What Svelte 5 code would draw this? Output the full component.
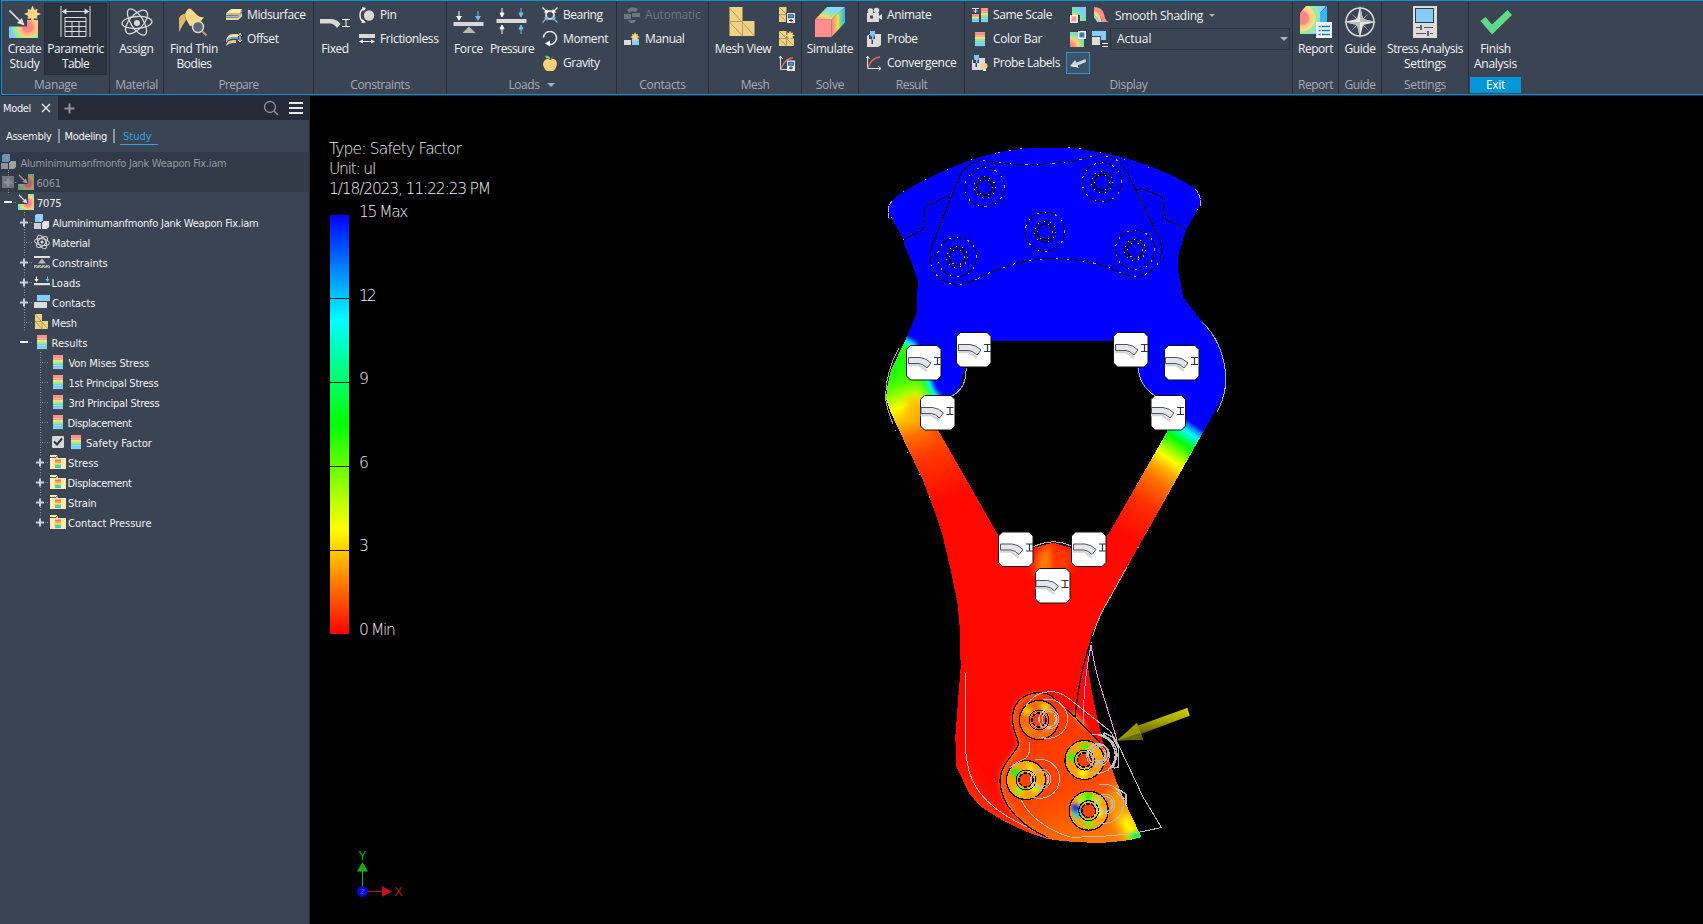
<script>
  // Spreads a label over its designed advance width.
  function fit(node, width) {
    const natural = node.getBoundingClientRect().width;
    const count = node.textContent.length;
    if (width && count) node.style.letterSpacing = (width - natural) / count + 'px';
  }

  const star = (x, y, r) => {
    let p = '';
    for (let i = 0; i < 16; i++) {
      const q = i % 2 ? r * 0.55 : i % 4 ? r * 0.82 : r;
      const a = (i * Math.PI) / 8;
      p += `${(x + q * Math.sin(a)).toFixed(2)},${(y - q * Math.cos(a)).toFixed(2)} `;
    }
    return `<polygon points="${p}" fill="#ffd580"/>`;
  };
  const bands = (x, y, w, h) =>
    ['#ff8f8f', '#ffb48a', '#ffd68a', '#90f090', '#8ae6f5', '#86ccff']
      .map((c, i) => `<rect x="${x}" y="${y + (i * h) / 6}" width="${w}" height="${h / 6 + 0.1}" fill="${c}"/>`)
      .join('');
  const triangles = (x, y, s) =>
    `<path d="M${x} ${y}h${s}v${s}h${s}v${s}h${-2 * s}z" fill="#f0d382"/><path d="M${x} ${y}l${2 * s} ${2 * s}M${x} ${y + s}l${s} ${s}M${x} ${y + s}h${s}v${s}" stroke="#b79a5c" fill="none"/>`;
  const calc = (x, y) =>
    `<rect x="${x}" y="${y}" width="8" height="10.5" fill="#e4e6e8"/><rect x="${x + 1.5}" y="${y + 1.7}" width="5" height="3" fill="#3d9be0" stroke="#2b3442" stroke-width=".7"/><path d="M${x + 2} ${y + 7.5}h4M${x + 4} ${y + 6}v3" stroke="#2b3442"/>`;

  const glyphs = {
    create: ['8 6 32 32', `<path d="M26 20h11v18H8V26.500h18z" fill="url(#hot)"/>${star(31.5, 14, 8.6)}<path d="M8.500 10.500L21 23" stroke="#dfe2e5" stroke-width="1.600"/><path d="M23.500 25.500l-7.500-2.500 5-5z" fill="#dfe2e5"/>`],
    param: ['59.500 6 32 32', `<path d="M60.500 6v31M89.500 6v31M62 11.500h26M64.500 17.500h21v19h-21zM64.500 21.500h21M64.500 26.500h21M64.500 31.500h21M71.500 21.500v15M78.500 21.500v15" fill="none" stroke="#dcdcdc"/><path d="M61 11.500l5-3v6zM89 11.500l-5-3v6z" fill="#dcdcdc"/>`],
    assign: ['121 6 32 32', `<g fill="none" stroke="#d8d8d8" stroke-width="1.300"><ellipse cx="137" cy="22.500" rx="15" ry="6" transform="rotate(-4 137 22.500)"/><ellipse cx="137" cy="22" rx="15" ry="6.200" transform="rotate(58 137 22)"/><ellipse cx="136.500" cy="22" rx="14.500" ry="7" transform="rotate(132 136.500 22)"/></g><circle cx="137" cy="23" r="3" fill="#d8d8d8"/>`],
    thin: ['178 6 32 32', `<path d="M179 32V18q2-4 6-4l1 6q-4 6-7 12z" fill="#d9b968"/><path d="M185 14q3-7 6-5l6 6q4 3 7 2l-5 7-9 2-4-7z" fill="#ffd98a"/><circle cx="198" cy="27" r="5.500" fill="#5b6675" stroke="#dcdcdc" stroke-width="1.400"/><path d="M202.500 31.500l4 4" stroke="#c99a6b" stroke-width="2.200"/>`],
    mids: ['226 7 16 16', `<path d="M226 13l5-4h11l-2 4z" fill="#ffe9ae"/><path d="M226 13h14l2-4v2l-2 4h-14z" fill="#dcb866"/><path d="M226 15.500h12l4-3v2l-4 2.500h-12z" fill="#7cc6fa"/><path d="M226 17.500h12l4-3.500v2.500l-4 3.500h-12z" fill="#f2d68c"/>`],
    offset: ['226 31 16 16', `<path d="M226 41q1-7 7-7h5v3h-5q-3 0-7 4z" fill="#f8dc96"/><path d="M226 42q2-4 7-4h5" stroke="#6cb9f2" stroke-width="1.600" fill="none"/><path d="M226 46q1-6 7-6h3v3h-3q-4 0-7 3z" fill="#e8c87c"/><path d="M240 33.500v8M238 36l2-2.500 2 2.500M238 39.500l2 2.500 2-2.500" fill="none" stroke="#dcdcdc"/>`],
    fixed: ['319 6 32 32', `<path d="M320 19h10q7 0 10.500 5l-3.500 4q-3-4.500-7-4.500h-10z" fill="#d8d8d8"/><path d="M342 19.500h8M342 26.500h8M346 19.500v7" stroke="#fff" fill="none"/>`],
    pin: ['359 7 16 16', `<circle cx="369" cy="15.500" r="5.200" fill="#d8d8d8"/><path d="M365 8.500q-5 1-5 6.500t4 7" fill="none" stroke="#fff" stroke-width="1.300"/><path d="M362 7l4 1-2.500 3zM366 22.500l-4.500.500 1-4z" fill="#fff"/>`],
    fric: ['359 31 16 16', `<path d="M359 34h16v4h-16z" fill="#d8d8d8"/><path d="M360 41.500h14" stroke="#fff"/><path d="M359 41.500l4-2v4zM375 41.500l-4-2v4z" fill="#fff"/>`],
    force: ['452.500 6 32 32', `<path d="M453 22h30v4h-30z" fill="#d8d8d8"/><path d="M468.500 26.500l6.500 6.500h-13z" fill="#b9b9b9"/><path d="M458.500 11v7" stroke="#fff"/><path d="M458.500 21l-3-5h6z" fill="#fff"/><path d="M477.500 11v7" stroke="#73bdf5"/><path d="M477.500 21l-3-5h6z" fill="#73bdf5"/>`],
    pressure: ['496.500 6 32 32', `<path d="M497 19h30v4h-30z" fill="#d8d8d8"/><g stroke="#fff" fill="#fff"><path d="M502.500 8v6M502.500 28v6"/><path d="M502.500 17l-2-4h4zM502.500 25l-2 4h4z"/></g><g stroke="#73bdf5" fill="#73bdf5"><path d="M521.500 8v6M521.500 28v6"/><path d="M521.500 17l-2-4h4zM521.500 25l-2 4h4z"/></g>`],
    bearing: ['542 7 16 16', `<circle cx="550" cy="15" r="4" fill="none" stroke="#d8d8d8" stroke-width="2"/><path d="M542.500 7.500l5 5M557.500 7.500l-5 5" stroke="#fff" stroke-width="1.300"/><path d="M542.500 22.500l5-5M557.500 22.500l-5-5" stroke="#73bdf5" stroke-width="1.300"/><path d="M547.500 9v3.500h-4zM552.500 9v3.500h4z" fill="#fff"/><path d="M547.500 21v-3.500h-4zM552.500 21v-3.500h4z" fill="#73bdf5"/>`],
    moment: ['542 31 16 16', `<path d="M543.500 37.500a6.500 6.500 0 1 1 5 6.800" fill="none" stroke="#e8e8e8" stroke-width="1.500"/><path d="M545 43.500l5-3v6z" fill="#fff"/>`],
    gravity: ['542 55 16 16', `<path d="M550 60q3-2.500 6 .500 2 4-.500 8-2.500 4-5.500 2.500-3 1.500-5.500-2.500-3-4.500 0-8 2.500-2.500 5.500-.500z" fill="#ffd27a"/><path d="M550.500 60l2-3.500" stroke="#8a6a3c"/><path d="M545 56q4-1 5.500 3-4 .500-5.500-3z" fill="#5fd98a"/>`],
    auto: ['624 7 16 16', `<g fill="#6d7581"><path d="M624 14h7v5h-7z"/><path d="M632 13h8v4h-8z"/><path d="M627 10q5-5 11-1l-2 3q-4-2-7 1zM628 20h8l-2 3h-4z"/></g>`],
    manual: ['624 31 16 16', `<path d="M624 40h7v5h-7z" fill="#dcdcdc"/><path d="M632 39h7v6h-7z" fill="#86ccff"/>${star(635, 37, 5)}`],
    mesh: ['726.500 6 32 32', `<path d="M729 7h13v14h12v15h-25z" fill="#f0d382"/><path d="M729 8l25 28M729 21.500h13V36M729 22l13 14" stroke="#b79a5c" fill="none"/>`],
    mesh1: ['779 7 16 16', `${triangles(779, 7, 7.5)}<path d="M786 12h9v11h-9z" fill="#3b4453"/>${calc(787, 13)}`],
    mesh2: ['779 31 16 16', `${triangles(779, 31, 7.5)}${star(790, 35.5, 5)}`],
    mesh3: ['779 55 16 16', `<path d="M780.500 56v13.500h7M778.500 59l2-3 2 3" stroke="#dcdcdc" fill="none"/><path d="M781 69q4-11 12-11" stroke="#e06b6b" fill="none" stroke-width="1.300"/>${calc(787, 60.5)}`],
    simulate: ['814 6 32 32', `<path d="M815 19.500h16.500V37H815z" fill="#ff8f8f"/><path d="M815 19.500L827 7h18l-13.500 12.500z" fill="url(#simTop)"/><path d="M831.500 19.500L845 7v15.500L831.500 37z" fill="url(#simSide)"/>`],
    animate: ['866 7 16 16', `<circle cx="870.500" cy="11" r="2.800" fill="#dcdcdc"/><circle cx="876.500" cy="10.500" r="2.800" fill="#dcdcdc"/><path d="M867 13h12v9h-12zM879 16l3-2v6l-3-2z" fill="#dcdcdc"/><path d="M870 15.500h3v3h-3z" fill="#3b4453"/>`],
    probe: ['866 31 16 16', `<path d="M867 36l3-2h11v11l-3 2h-11z" fill="#dcdcdc"/><path d="M869 35h6v4h-2v5h-1.500v-5H869z" fill="#3b4453"/><path d="M870 31h5v4l-1.500 2v3H872v-3l-2-2z" fill="#7cc6fa"/>`],
    conv: ['866 55 16 16', `<path d="M867.500 56v12.500H881M865.500 59l2-3 2 3M878.500 66.500l2.500 2-2.500 2" stroke="#dcdcdc" fill="none"/><path d="M868 68q3-10 12-11" stroke="#e06b6b" fill="none" stroke-width="1.300"/>`],
    same: ['972 7 16 16', `${bands(981, 8, 7, 14)}${bands(972, 14, 7, 8)}<path d="M972 8.500h7M975.500 9v4M973.500 11h4" stroke="#dcdcdc"/>`],
    cbar: ['972 31 16 16', bands(975, 32, 10, 14)],
    plabel: ['972 55 16 16', `<path d="M972 60l3-2h10v10l-3 2h-10z" fill="#dcdcdc"/><path d="M973 58h6v5h-2v4h-1.500v-4H973z" fill="#3b4453"/><path d="M974 55h5v4l-1.500 1.500V63H976v-2.500l-2-1.500z" fill="#7cc6fa"/><circle cx="984.500" cy="66" r="3" fill="#ffd27a"/><path d="M983 69h3v2h-3z" fill="#eee"/>`],
    maxv: ['1070 7 16 16', `<path d="M1072 7h14v14h-6v-6h-8z" fill="url(#maxG)"/><rect x="1070.700" y="15.700" width="6.500" height="6.500" fill="#ff9c8c" stroke="#fff" stroke-width="1.400"/>`],
    minv: ['1070 31 16 16', `<path d="M1070 32h8v6h6v9h-14z" fill="url(#minG)"/><rect x="1078.700" y="31.700" width="6.500" height="6.500" fill="#3d78a8" stroke="#fff" stroke-width="1.400"/>`],
    light: ['1070 55 16 16', `<path d="M1070 66l5-6 1.500 2.500 9-3.500.500 3-8.500 3.500 1 2z" fill="#cfd3d6"/><path d="M1070 66l8.500 1.500-1-2z" fill="#fff"/>`],
    smooth: ['1094 7 16 16', `<path d="M1094 7q8 0 10 7 1 7 5 8h-7q-1-4-2-6-2-4-6-5z" fill="#ff8f8f"/><path d="M1094 11q5 1 6 5t2 6h-3q-1-4-5-7z" fill="#ffd27a"/><path d="M1094 15q4 2 5 7h-2q-1-3-3-4z" fill="#8ad8e8"/>`],
    disp: ['1092 31 16 16', `<path d="M1092 31h14v9h-5v-4h-9z" fill="#86ccff"/><path d="M1092 37h8v8h-8z" fill="#dcdcdc"/><path d="M1102 43.500h6M1102 46.500h6" stroke="#fff"/>`],
    report: ['1300 6 32 32', `<path d="M1300 13l6-7h20l-6 7v21h-20z" fill="url(#repG)"/><path d="M1320 13l7-7v20l-7 5z" fill="#35b7f5"/><path d="M1316 22h16v16h-16z" fill="#f2f2f2"/><path d="M1322 26.500h8M1322 30.500h8M1322 34.500h8M1318.500 26.500h2M1318.500 30.500h2M1318.500 34.500h2" stroke="#0d86d6" stroke-width="1.400"/>`],
    guide: ['1344 6 32 32', `<circle cx="1360" cy="22" r="14" fill="none" stroke="#d8d8d8" stroke-width="1.500"/><path d="M1351 13l7 6 2-2 2 2 7-6-6 7 2 2-2 2 6 7-7-6-2 2-2-2-7 6 6-7-2-2 2-2z" fill="#a9adb3"/><path d="M1360 6l3 13 13 3-13 3-3 13-3-13-13-3 13-3z" fill="#e6e6e6"/><path d="M1360 6v16h16l-13-3zM1360 38V22h-16l13 3z" fill="#b9bcc1"/>`],
    settings: ['1409 6 32 32', `<path d="M1413 6h24v32h-24z" fill="#dcdcdc"/><rect x="1415.500" y="8.500" width="18" height="14" fill="#86ccff" stroke="#333b47"/><path d="M1416 27.500h4M1424 27.500h9M1416 33.500h10M1430 33.500h3" stroke="#555"/><path d="M1421 25v5M1428 31v5" stroke="#444" stroke-width="1.600"/>`],
    finish: ['1479.500 6 32 32', `<path d="M1480 21l5-4 6.500 7.500L1507 10l4.500 5L1491.500 34.500z" fill="#5fd98a"/>`],
    // browser icons
    study: ['0 0 16 16', `<path d="M10 0h6v16H0v-6h10z" fill="url(#hotS)"/><path d="M1 1l7 7" stroke="#e6e6e6" stroke-width="1.200"/><path d="M9.500 9.500l-5-1.500 3.500-3.500z" fill="#e6e6e6"/>`],
    assembly: ['0 0 16 16', `<path d="M1 2l1.500-2H9v7H7.500L8 8H1z" fill="#86ccff"/><path d="M1 2h5.500V8" fill="none" stroke="#b8e2ff" stroke-width=".7"/><path d="M0 9h7v6H0z" fill="#cfcfcf"/><path d="M8 9l2-2h5v6l-2 2H8z" fill="#e3e3e3"/>`],
    atom: ['0 0 16 16', `<g fill="none" stroke="#d0d0d0"><ellipse cx="8" cy="8" rx="7.500" ry="3.400" transform="rotate(10 8 8)"/><ellipse cx="8" cy="8" rx="7.500" ry="3.600" transform="rotate(62 8 8)"/><ellipse cx="8" cy="8" rx="7" ry="3.600" transform="rotate(135 8 8)"/></g><circle cx="8" cy="8" r="1.500" fill="#ddd"/>`],
    constraints: ['0 0 16 16', `<path d="M0 2h16v2H0z" fill="#e0e0e0"/><path d="M8 4.500l4 5H4z" fill="#b5b8b0"/><path d="M0 11h16v3H0z" fill="#a9aca6"/><path d="M1 14l3-3M5 14l3-3M9 14l3-3M13 14l3-3" stroke="#5b6470"/>`],
    loads: ['0 0 16 16', `<path d="M0 9h16v2.200H0z" fill="#e0e0e0"/><path d="M2.500 2.500v3" stroke="#fff"/><path d="M2.500 8l-2-3h4z" fill="#fff"/><path d="M13.500 2.500v3" stroke="#73bdf5"/><path d="M13.500 8l-2-3h4z" fill="#73bdf5"/>`],
    contacts: ['0 0 16 16', `<path d="M3 1h13v6H3z" fill="#86ccff"/><path d="M0 8h13v6H0z" fill="#dcdcdc"/>`],
    meshS: ['0 0 16 16', `<path d="M1 0h7v7h6v8H1z" fill="#f0d382"/><path d="M1 0l13 15M1 7l7 8M1 7.500h7V15" stroke="#b79a5c" fill="none"/>`],
    bars: ['0 0 16 16', bands(3, 1, 10, 14)],
    folder: ['0 0 16 16', `<path d="M0 1h7l1 3h8v11H0z" fill="#ffeab0"/><path d="M0 3.500h6l1-1.500" stroke="#5b5a50" fill="none"/>${['#f07070', '#f5a04a', '#f5e04a', '#5ad860', '#3bb8f0'].map((c, i) => `<rect x="5" y="${5.5 + i * 1.7}" width="6" height="1.800" fill="${c}"/>`).join('')}`],
  };

  const big = (icon, w, lines, extra = {}) => ({ kind: 'big', icon, w, lines, ...extra });
  const col = (gap, rows) => ({ kind: 'col', gap, rows });

  const panels = [
    { w: 108, pad: 4, title: ['Manage', 43], items: [big('create', 37, [['Create', 33.6], ['Study', 30]]), big('param', 63, [['Parametric', 56.5], ['Table', 27]], { on: true, gap: 1 })] },
    { w: 54, pad: 0, title: ['Material', 42.5], items: [big('assign', 53, [['Assign', 34.5]])] },
    { w: 150, pad: 1, title: ['Prepare', 40], items: [big('thin', 58, [['Find Thin', 48], ['Bodies', 35]]), col(3, [['mids', 'Midsurface', 58.5], ['offset', 'Offset', 31.5]])] },
    { w: 133, pad: 0, title: ['Constraints', 59.5], items: [big('fixed', 42, [['Fixed', 27.5]]), col(3, [['pin', 'Pin', 16.5], ['fric', 'Frictionless', 58.5]])] },
    { w: 170, pad: 0, title: ['Loads', 31], caret: true, items: [big('force', 43, [['Force', 29]]), big('pressure', 44, [['Pressure', 44]]), col(8, [['bearing', 'Bearing', 39.5], ['moment', 'Moment', 45], ['gravity', 'Gravity', 36.5]])] },
    { w: 92, pad: 7, title: ['Contacts', 46.5], items: [col(0, [['auto', 'Automatic', 55.5, true], ['manual', 'Manual', 39.5]])] },
    { w: 93, pad: 0, title: ['Mesh', 28.5], items: [big('mesh', 68, [['Mesh View', 56.5]]), col(2, [['mesh1'], ['mesh2'], ['mesh3']])] },
    { w: 57, pad: 0, title: ['Solve', 28.5], items: [big('simulate', 56, [['Simulate', 46.5]])] },
    { w: 106, pad: 7, title: ['Result', 31.5], items: [col(0, [['animate', 'Animate', 44.5], ['probe', 'Probe', 30.5], ['conv', 'Convergence', 69.5]])] },
    { w: 328, pad: 7, title: ['Display', 38], display: true, items: [col(0, [['same', 'Same Scale', 59], ['cbar', 'Color Bar', 49], ['plabel', 'Probe Labels', 67]])] },
    { w: 46, pad: 0, title: ['Report', 35], items: [big('report', 45, [['Report', 35]])] },
    { w: 43, pad: 0, title: ['Guide', 31], items: [big('guide', 42, [['Guide', 31]])] },
    { w: 87, pad: 0, title: ['Settings', 42], items: [big('settings', 86, [['Stress Analysis', 76], ['Settings', 42]])] },
    { w: 54, pad: 0, title: ['Exit', 19], exit: true, items: [big('finish', 53, [['Finish', 30.5], ['Analysis', 43]])] },
  ];

  // ex: expander sign; ix: icon offset; tx: text offset; lx: guide column; v: guides running through the row
  const tree = [
    { t: 'Aluminimumanfmonfo Jank Weapon Fix.iam', w: 206, icon: 'assembly', ix: 1, tx: 20.5, dim: true, v: [] },
    { t: '6061', w: 24.5, icon: 'study', ix: 18, tx: 36.5, ex: '+', box: true, lx: 8, dim: true, v: [8] },
    { t: '7075', w: 24.5, icon: 'study', ix: 18, tx: 37, ex: '-', lx: 8, v: [] },
    { t: 'Aluminimumanfmonfo Jank Weapon Fix.iam', w: 206, icon: 'assembly', ix: 34, tx: 52.5, ex: '+', lx: 24, v: [24] },
    { t: 'Material', w: 38, icon: 'atom', ix: 34, tx: 52, lx: 24, v: [24] },
    { t: 'Constraints', w: 55.5, icon: 'constraints', ix: 34, tx: 52, ex: '+', lx: 24, v: [24] },
    { t: 'Loads', w: 29, icon: 'loads', ix: 34, tx: 51.5, ex: '+', lx: 24, v: [24] },
    { t: 'Contacts', w: 43.5, icon: 'contacts', ix: 34, tx: 52, ex: '+', lx: 24, v: [24] },
    { t: 'Mesh', w: 25.5, icon: 'meshS', ix: 34, tx: 51.5, lx: 24, v: [24] },
    { t: 'Results', w: 36, icon: 'bars', ix: 34, tx: 51.5, ex: '-', lx: 24, v: [] },
    { t: 'Von Mises Stress', w: 80.5, icon: 'bars', ix: 50, tx: 68.5, lx: 40, v: [40] },
    { t: '1st Principal Stress', w: 90, icon: 'bars', ix: 50, tx: 68.5, lx: 40, v: [40] },
    { t: '3rd Principal Stress', w: 91, icon: 'bars', ix: 50, tx: 68.5, lx: 40, v: [40] },
    { t: 'Displacement', w: 64, icon: 'bars', ix: 50, tx: 67.5, lx: 40, v: [40] },
    { t: 'Safety Factor', w: 66, icon: 'bars', ix: 68, tx: 86, lx: 40, v: [40], check: true },
    { t: 'Stress', w: 30.5, icon: 'folder', ix: 50, tx: 68, ex: '+', lx: 40, v: [40] },
    { t: 'Displacement', w: 64, icon: 'folder', ix: 50, tx: 67.5, ex: '+', lx: 40, v: [40] },
    { t: 'Strain', w: 28.5, icon: 'folder', ix: 50, tx: 68, ex: '+', lx: 40, v: [40] },
    { t: 'Contact Pressure', w: 83.5, icon: 'folder', ix: 50, tx: 68, ex: '+', lx: 40, v: [], last: true },
  ];

  const labels = [['15 Max', 48], ['12', 15.5], ['9', 0], ['6', 0], ['3', 0], ['0 Min', 35.5]];

  const outline =
    'M904 240L888 212Q888 206 891 202Q896 196 903 192Q926 178 953 167Q976 157 998 152.700Q1015 149 1032 148H1070Q1100 151 1127 158.500Q1148 165 1170 174.500L1193 187Q1201 192 1200.700 201L1198 209L1186 230L1177.500 258V267L1183 297L1202 322L1217 343Q1225.500 361 1225.500 380Q1225 392 1220 402L1210 420L1148 530L1127 567L1103 610L1092 633Q1087 650 1088 667L1092 693L1097 717L1103 743L1117 783L1130 813L1141.500 837Q1130 841 1103 842.700Q1070 843 1047 838.700Q1020 831 997 817L980 806L969 793L956.500 767L955.300 737L958.700 693L960.700 667L959.700 627L957.300 602L950 567L942 533L933 507L922 478L907 447L890 411L886 398Q887 384 891 370L905 341L917 313L917.700 280L910 258L904 245Z';
  const cavity =
    'M966 341H1137V367Q1138 378 1144 386L1156 396L1167.500 431L1108 535L1090 549L1071.700 548L1053 542.700L1033 548L1010 550L998 535L938 430V408L952 395.700L960 387L965 367Z';

  const topBolts = [[984.7, 187.3], [1102, 182.3], [1045, 231.7], [957, 257], [1135, 250]];
  const lowBolts = [
    { x: 1039, y: 720, g: [1049, 719], heat: [[1027, 711, '#ffd000'], [1045, 707, '#ffe000'], [1046, 727, '#ff8000'], [1028, 731, '#ff8800']] },
    { x: 1084.5, y: 760, g: [1098, 754], heat: [[1085, 747, '#40ff00'], [1072, 757, '#20ff20'], [1083, 773, '#ffff00'], [1096, 752, '#ffb000']] },
    { x: 1026, y: 780, g: [1041, 779], heat: [[1016, 773, '#00ff20'], [1019, 790, '#80ff00'], [1035, 788, '#c0ff00'], [1030, 768, '#ffe000']] },
    { x: 1088.7, y: 810.7, g: [1105, 804], heat: [[1082, 799, '#a0ff00'], [1088, 797, '#00ff20'], [1096, 801, '#c0ff00'], [1078, 814, '#00e0ff'], [1089, 823, '#60ff00'], [1099, 812, '#ffff00'], [1076, 808, '#0020ff']] },
  ];
  const pins = [
    [906, 345, 0], [956, 332, 0], [1113, 332, 0], [1164, 345, -1], [920, 395, -1.5], [1150.5, 395, -1.5],
    [998, 531.5, 0], [1071, 531.5, 0], [1035, 568, -1.5],
  ];
</script>

{#snippet icon(name, size)}
  <svg class="ico" width={size} height={size} viewBox={glyphs[name][0]}>{@html glyphs[name][1]}</svg>
{/snippet}

<svg class="defs" width="0" height="0">
  <defs>
    <radialGradient id="hot" gradientUnits="userSpaceOnUse" cx="27" cy="27" r="20">
      <stop offset=".25" stop-color="#ff8585" /><stop offset=".32" stop-color="#ffb07d" /><stop offset=".5" stop-color="#ffcf80" /><stop offset=".58" stop-color="#a4ee8c" /><stop offset=".75" stop-color="#8aeab0" /><stop offset=".85" stop-color="#7cc8ff" />
    </radialGradient>
    <radialGradient id="hotS" gradientUnits="userSpaceOnUse" cx="10" cy="9" r="12">
      <stop offset=".25" stop-color="#ff8585" /><stop offset=".5" stop-color="#ffcf80" /><stop offset=".7" stop-color="#9aee90" /><stop offset="1" stop-color="#6cc4ff" />
    </radialGradient>
    <linearGradient id="simTop" gradientUnits="userSpaceOnUse" x1="820" y1="20" x2="824" y2="7">
      <stop offset="0" stop-color="#ff9c8c" /><stop offset=".35" stop-color="#ffd27a" /><stop offset=".55" stop-color="#9aee90" /><stop offset="1" stop-color="#86d8ff" />
    </linearGradient>
    <linearGradient id="simSide" gradientUnits="userSpaceOnUse" x1="831" y1="0" x2="845" y2="0">
      <stop offset="0" stop-color="#f07f80" /><stop offset=".3" stop-color="#f7b068" /><stop offset=".5" stop-color="#f2dc5a" /><stop offset=".7" stop-color="#62dd8c" /><stop offset="1" stop-color="#39a9f5" />
    </linearGradient>
    <radialGradient id="maxG" gradientUnits="userSpaceOnUse" cx="1071" cy="22" r="17">
      <stop offset=".4" stop-color="#ffd27a" /><stop offset=".65" stop-color="#7ee8a0" /><stop offset="1" stop-color="#7cc8ff" />
    </radialGradient>
    <radialGradient id="minG" gradientUnits="userSpaceOnUse" cx="1070" cy="47" r="17">
      <stop offset=".2" stop-color="#ff8585" /><stop offset=".5" stop-color="#ffd27a" /><stop offset=".75" stop-color="#7ee8a0" /><stop offset="1" stop-color="#7cc8ff" />
    </radialGradient>
    <radialGradient id="repG" gradientUnits="userSpaceOnUse" cx="1302" cy="18" r="24">
      <stop offset=".25" stop-color="#ff8585" /><stop offset=".33" stop-color="#ffc680" /><stop offset=".5" stop-color="#f8e08a" /><stop offset=".6" stop-color="#9aee90" /><stop offset=".8" stop-color="#8adcf5" />
    </radialGradient>
  </defs>
</svg>

<div class="app">
  <header class="ribbon">
    {#each panels as p}
      <section class="panel" class:last={p.exit} style="width:{p.w}px">
        <div class="body" style="padding-left:{p.pad}px">
          {#each p.items as item}
            {#if item.kind === 'big'}
              <button class="big" class:on={item.on} style="width:{item.w}px;margin-left:{item.gap ?? 0}px">
                {@render icon(item.icon, 32)}
                <span class="caption">
                  {#each item.lines as [text, w]}<span class="line"><span class="t" use:fit={w}>{text}</span></span>{/each}
                </span>
              </button>
            {:else}
              <div class="stack" style="margin-left:{item.gap}px">
                {#each item.rows as [name, text, w, off]}
                  <div class="small" class:off>
                    {@render icon(name, 16)}
                    {#if text}<span class="t" use:fit={w}>{text}</span>{/if}
                  </div>
                {/each}
              </div>
            {/if}
          {/each}
          {#if p.display}
            <div class="modes">
              <div class="mode-row"><span class="slot">{@render icon('maxv', 16)}</span><span class="slot two">{@render icon('smooth', 16)}</span><span class="t shade" use:fit={88}>Smooth Shading</span><i class="caret sm"></i></div>
              <div class="mode-row"><span class="slot">{@render icon('minv', 16)}</span><span class="slot three">{@render icon('disp', 16)}</span><span class="select"><span class="t" use:fit={34.5}>Actual</span><i class="caret"></i></span></div>
              <div class="mode-row"><span class="lit">{@render icon('light', 16)}</span></div>
            </div>
          {/if}
        </div>
        <div class="title" class:exit={p.exit}>
          <span class="t" use:fit={p.title[1]}>{p.title[0]}</span>{#if p.caret}<i class="caret"></i>{/if}
        </div>
      </section>
    {/each}
  </header>

  <div class="main">
    <aside class="browser">
      <div class="tabs">
        <div class="tab">
          <span class="t" use:fit={28}>Model</span>
          <svg width="10" height="10" viewBox="0 0 10 10"><path d="M1 1l8 8M9 1L1 9" stroke="#dfe2e6" stroke-width="1.500" /></svg>
        </div>
        <svg class="add" width="11" height="11" viewBox="0 0 11 11"><path d="M5.500 .5v10M.5 5.500h10" stroke="#90969e" stroke-width="2" /></svg>
        <svg class="find" width="16" height="16" viewBox="0 0 16 16"><circle cx="7" cy="7" r="5.500" fill="none" stroke="#90969e" stroke-width="1.300" /><path d="M11 11l4 4" stroke="#90969e" stroke-width="1.500" /></svg>
        <svg class="menu" width="14" height="12" viewBox="0 0 14 12"><path d="M0 1h14M0 6h14M0 11h14" stroke="#e6e8ea" stroke-width="2" /></svg>
      </div>
      <nav class="views">
        <span class="t" use:fit={45.5}>Assembly</span><i class="bar"></i><span class="t" use:fit={42.5}>Modeling</span><i class="bar"></i><span class="active"><span class="t" use:fit={28.5}>Study</span></span>
      </nav>
      <div class="tree">
        {#each tree as r, i}
          <div class="row" class:dim={r.dim}>
            <svg class="lead" width={r.tx} height="20">
              <g stroke="#8b939e" stroke-dasharray="1 1.500" fill="none">
                {#each r.v as x}<path d="M{x + 0.5} 0V20" />{/each}
                {#if r.last}<path d="M40.500 0V10" />{/if}
                {#if i === 0}<path d="M8.500 18V20" />{/if}
                {#if i === 2}<path d="M8.500 0V3" />{/if}
                {#if r.lx}<path d="M{r.lx + 2} 10.500H{r.check ? 50 : r.ix - 1}" />{/if}
              </g>
              {#if r.box}<rect x="2" y="4" width="12" height="12" fill="#70757e" />{/if}
              {#if r.ex}
                {#if !r.box}<rect x={r.lx - 4} y="5" width="9" height="10" fill="#3b4453" />{/if}
                <path d={r.ex === '+' ? `M${r.lx - 4} 10.500h8M${r.lx} 6.500v8` : `M${r.lx - 4} 10h8`} stroke={r.box ? '#8d949d' : r.ex === '+' ? '#c3d3e2' : '#fff'} stroke-width="2" />
              {/if}
              {#if r.check}
                <rect x="52" y="4" width="12" height="12" rx="1" fill="#d5d8dc" /><path d="M54 9.500l3 3 5-6" fill="none" stroke="#2e3744" stroke-width="2" />
              {/if}
              <svg x={r.ix} y="2" width="16" height="16" viewBox="0 0 16 16" opacity={r.dim ? 0.6 : 1}>{@html glyphs[r.icon][1]}</svg>
            </svg>
            <span class="t" use:fit={r.w}>{r.t}</span>
          </div>
        {/each}
      </div>
    </aside>

    <main class="viewport">
      <svg class="scene" viewBox="310 96 1393 828" width="1393" height="828">
        <defs>
          <mask id="solid" maskUnits="userSpaceOnUse" x="860" y="130" width="400" height="740">
            <path d={outline} fill="#fff" shape-rendering="crispEdges" /><path d={cavity} fill="#000" shape-rendering="crispEdges" />
          </mask>
          <linearGradient id="armR" gradientUnits="userSpaceOnUse" x1="1203" y1="430" x2="1131" y2="538">
            <stop offset="0" stop-color="#00f" /><stop offset=".03" stop-color="#0080ff" /><stop offset=".08" stop-color="#0ff" /><stop offset=".17" stop-color="#0f0" /><stop offset=".33" stop-color="#ff0" /><stop offset=".42" stop-color="#fa0" /><stop offset=".52" stop-color="#ff7000" /><stop offset=".72" stop-color="#ff3000" /><stop offset="1" stop-color="#ff0a00" />
          </linearGradient>
          <linearGradient id="armL" gradientUnits="userSpaceOnUse" x1="892" y1="372" x2="938" y2="504">
            <stop offset="0" stop-color="#20ff00" /><stop offset=".1" stop-color="#50ff00" /><stop offset=".26" stop-color="#ff0" /><stop offset=".36" stop-color="#fb0" /><stop offset=".48" stop-color="#ff7000" /><stop offset=".64" stop-color="#ff3a00" /><stop offset="1" stop-color="#ff0800" />
          </linearGradient>
          <linearGradient id="plate" gradientUnits="userSpaceOnUse" x1="1030" y1="700" x2="1100" y2="850">
            <stop offset="0" stop-color="#ff3000" /><stop offset=".6" stop-color="#ff4800" /><stop offset="1" stop-color="#ff8000" />
          </linearGradient>
          <filter id="b2" x="-50%" y="-50%" width="200%" height="200%"><feGaussianBlur stdDeviation="2" /></filter>
          <filter id="b4" x="-50%" y="-50%" width="200%" height="200%"><feGaussianBlur stdDeviation="4" /></filter>
          <filter id="b12" x="-50%" y="-50%" width="200%" height="200%"><feGaussianBlur stdDeviation="11" /></filter>
          {#each lowBolts as b, i}<clipPath id="ring{i}"><circle cx={b.x} cy={b.y} r="19.500" /></clipPath>{/each}
          <linearGradient id="cone" x1="0" y1="0" x2="0" y2="1"><stop offset="0" stop-color="#c8c800" /><stop offset=".5" stop-color="#a8a800" /><stop offset="1" stop-color="#605f00" /></linearGradient>
        </defs>

        <g mask="url(#solid)">
          <rect x="870" y="130" width="370" height="730" fill="#ff0800" />
          <path d="M860 330H1050V520H860z" fill="url(#armL)" />
          <path d="M1053 380H1240V560H1053z" fill="url(#armR)" />
          <path d="M908 398L925 396L922 425L905 420z" fill="#ffb000" filter="url(#b4)" opacity=".8" />
          <path d="M922 412L958 398L945 460z" fill="#ff4000" filter="url(#b4)" opacity=".7" />
          <path d="M902 341L913 347L921 368L931 390L938 402" fill="none" stroke="#20ff20" stroke-width="14" filter="url(#b4)" />
          <path d="M902 338L914 344L924 366L934 390L941 402" fill="none" stroke="#0ff" stroke-width="8" filter="url(#b2)" />
          <path d="M870 130H1240V380L1207 424L1195 419L1187 410L1175 395H1100V370H990V400H944L935 390L926 366L916 343L905 337L870 337z" fill="#00f" filter="url(#b2)" />
          <path d="M870 130H1240V400L1212 412L1190 405L1175 395H1100V362H980V396H948L938 388L929 366L918 338L908 334H870z" fill="#00f" />
          <path d="M1052 540L1038 552L1034 574L1055 574L1053 556z" fill="#ff8000" filter="url(#b4)" />
          <path d="M1054 543L1056 572H1072V550z" fill="#ff3c00" filter="url(#b4)" />
          <path d="M958 765L975 800L1010 825L1050 840L1080 850H950z" fill="#ff5000" filter="url(#b12)" />
          <path d="M1040 692.500C1020 693 1012 706 1012.500 720C1013 735 1020 738 1018 746C1012 757 1000 765 1000 782C1001 805 1020 825 1045 838L1075 845H1145V820L1113 760L1102 745L1075 717L1056 700Q1050 693 1040 692.500z" fill="url(#plate)" />
          <path d="M1040 694C1021 694 1014 706 1014 720C1014 735 1021 738 1019 746C1013 757 1001 765 1001 782C1002 805 1021 825 1046 838" fill="none" stroke="#ff8c00" stroke-width="5" filter="url(#b2)" opacity=".5" />
          <path d="M1118 780L1106 800L1112 822L1124 842L1146 840z" fill="#ff9a00" filter="url(#b4)" />
          <path d="M1128 812L1118 820L1130 840L1144 838z" fill="#ff0" filter="url(#b4)" />
          <path d="M1136 832L1130 838H1144z" fill="#00ff40" stroke="#00ff40" stroke-width="3" filter="url(#b2)" />
          <path d="M1140 836h4" stroke="#0fe" stroke-width="3" />
          <path d="M1072 712L1086 728" stroke="#ffc000" stroke-width="3" filter="url(#b2)" />
        </g>

        <g fill="none" stroke="#000" shape-rendering="crispEdges">
          <path d="M930.500 258Q930 252 932 245L958 180Q965 162 983 160.500Q1000 163 1016 164.300Q1050 165 1075 161Q1090 156 1103 155.500Q1118 157 1126 170L1160 240Q1164 254 1158 263Q1150 276 1135 276.500Q1125 276 1115 270Q1090 259 1052 258.500Q1015 259 977 279Q966 284.500 957 284.500Q932 282 930.500 258z" />
          <path d="M903 240L923.500 229L925 208L928 205L947 196.500L951 198M1136.500 190L1142 188.500L1162 197L1165.500 219L1186 229" />
          {#each topBolts as [x, y]}<circle cx={x} cy={y} r="19.700" /><circle cx={x} cy={y} r="10.500" /><circle cx={x} cy={y} r="7.800" stroke-width="1.600" />{/each}
        </g>
        <g fill="none" stroke="#a8a8a8" shape-rendering="crispEdges">
          {#each topBolts as [x, y]}<circle cx={x} cy={y} r="19.700" stroke-dasharray="1 9 2.500 6" /><circle cx={x} cy={y} r="10.500" stroke-dasharray="1 5" /><circle cx={x} cy={y} r="7.800" stroke-dasharray="1 7" />{/each}
          <path d="M977 279Q966 284.500 957 284.500Q932 282 930.500 258M983 160.500Q1000 163 1016 164.300Q1050 165 1075 161Q1090 156 1103 155.500Q1118 157 1126 170M1158 263Q1150 276 1135 276.500Q1125 276 1115 270Q1090 259 1052 258.500Q1015 259 977 279" stroke-dasharray="1.500 14 2.500 9" />
          <path d="M1202 322Q1222 341 1225.500 372V386Q1223 402 1217 412M899 348Q886 370 885.500 397Q886 407 893 424M966 368Q967 388 952 396M1138.500 368Q1139 385 1155 396M1033 547Q1053 537 1072 546.500" />
          <path d="M904 240L888 212M903 192Q926 178 953 167Q976 157 998 152.700M1100 152Q1148 165 1193 187M895 430L922 478L933 507M1198 209L1186 230" stroke-dasharray="1 24" />
          <path d="M1148 530L1127 567" stroke-dasharray="1.500 18" /><path d="M1127 567L1103 610Q1091 633 1089.500 655" />
        </g>
        <g fill="none" stroke="#f58af5" shape-rendering="crispEdges">
          <path d="M888 218V209Q889 203 894 200M1195 189Q1201 194 1200.500 206" stroke-dasharray="5 1.500" />
          <path d="M998 152.500L1026 147.500M1068 147.500L1085 149" stroke-dasharray="2 9" />
          <path d="M1091 645Q1084 680 1083.500 712V727M1091 645Q1094 665 1101 688L1117 740" />
        </g>

        <g fill="none" stroke="#000" shape-rendering="crispEdges">
          <path d="M1093 636Q1080 668 1075 717" stroke-width="1.500" />
          <path d="M1040 692.500C1020 693 1012 706 1012.500 720C1013 735 1020 738 1018 746C1012 757 1000 765 1000 782C1001 805 1020 825 1048 838M1040 692.500Q1050 693 1056 700L1075 717L1102 745" stroke-width="1.300" />
        </g>
        {#each lowBolts as b, i}
          <g clip-path="url(#ring{i})">
            <circle cx={b.x} cy={b.y} r="20" fill={i ? '#ffa000' : '#ff6a00'} />
            <g filter="url(#b2)">{#each b.heat as [x, y, c]}<circle cx={x} cy={y} r="4.500" fill={c} />{/each}</g>
          </g>
          <g fill="none" stroke="#000" shape-rendering="crispEdges">
            <circle cx={b.x} cy={b.y} r="19.500" stroke-width="1.300" /><circle cx={b.x} cy={b.y} r="10" /><circle cx={b.x} cy={b.y} r="7" fill="#ff4000" stroke-width="1.600" stroke-dasharray="4 1" />
          </g>
        {/each}
        <g fill="none" stroke="#bcbcbc" shape-rendering="crispEdges">
          <path d="M965.500 673V745Q966 775 980 793Q996 813 1027 827" />
          <path d="M1026 706Q1036 690 1055 692Q1063 693 1072 701L1110 731L1117 742L1128 765L1143 797L1161.500 827.500Q1120 838 1070 837Q1035 826 1021 800M1029 742Q1032 750 1026 758Q1015 763 1010 768" />
          {#each lowBolts as b}
            <path d="M{b.g[0] - 6} {b.g[1] - 19}A19.500 19.500 0 1 1 {b.g[0] - 8} {b.g[1] + 18}" />
            <circle cx={b.g[0]} cy={b.g[1]} r="10" /><circle cx={b.g[0] + 0.5} cy={b.g[1]} r="7.500" /><circle cx={b.g[0] - 2} cy={b.g[1] + 0.5} r="8.500" stroke-dasharray="5 3" />
          {/each}
          <path d="M1098 735Q1112 738 1115 752Q1117 762 1108 770M1103 734Q1118 744 1117 756L1113 768M1104 733L1113 737L1118.500 748V767L1114 768" stroke-width="1.500" />
          <path d="M1118 789L1126 794V804L1122 808M1116 792L1125 799" stroke-width="1.300" />
          <circle cx="1101" cy="753" r="8" /><circle cx="1098" cy="755" r="11.500" />
        </g>

        <path d="M1137 726L1187 708L1189 716L1141 734z" fill="url(#cone)" />
        <path d="M1117 740.500L1137 722.500L1143 739.500z" fill="#969600" /><path d="M1117 740.500L1140 733L1143 739.500z" fill="#686700" />
        <path d="M1186.500 708l2.500 8" stroke="#d6d400" stroke-width="1.500" />

        {#each pins as [x, y, d]}
          <g transform="translate({x} {y})">
            <path d="M4.500 .5H31L35 4.500V31L31 35H4.500L.5 31V4.500z" fill="#fff" stroke="#111" />
            <path d="M{2 + d} 20H{13 + d}L{21 + d} 26" stroke="#d5d5d8" stroke-width="2.500" fill="none" />
            <path d="M{2.5 + d} 12.500H{14 + d}Q{20 + d} 13 {25 + d} 18L{21 + d} 23Q{17 + d} 19 {13 + d} 18.500H{2.5 + d}z" fill="#e4e5ea" stroke="#4c515c" />
            <path d="M{28 + d} 12.500h7M{28 + d} 19.500h7M{31.5 + d} 12.500v7" stroke="#30353e" fill="none" stroke-width="1.200" />
          </g>
        {/each}

        <path d="M362.500 870V888" stroke="#0cc00c" /><path d="M362.500 862l5.500 9.500h-11z" fill="#10b010" />
        <path d="M367 891.500h16" stroke="#c81010" /><path d="M392 891.500l-10-5.500v11z" fill="#c01414" />
        <circle cx="362.500" cy="891.500" r="5.500" fill="#0808c8" /><path d="M360.500 889.500h4l-4 4h4" stroke="#3c3cf0" fill="none" stroke-width=".8" />
        <text x="362.500" y="860" text-anchor="middle" fill="#12b812" class="axis">Y</text>
        <text x="398.500" y="896" text-anchor="middle" fill="#c41010" class="axis">X</text>
      </svg>

      <div class="legend">
        <div><span class="t" use:fit={132}>Type: Safety Factor</span></div>
        <div><span class="t" use:fit={46}>Unit: ul</span></div>
        <div><span class="t" use:fit={161}>1/18/2023, 11:22:23 PM</span></div>
        <div class="scale">
          <div class="ramp"><i></i><i></i><i></i><i></i><i class="end"></i></div>
          <div class="ticks">
            {#each labels as [text, w]}<div><span class="t" use:fit={w}>{text}</span></div>{/each}
          </div>
        </div>
      </div>
    </main>
  </div>
</div>

<style>
  :global(body) { margin: 0; background: #000; overflow: hidden; }
  .app { width: 1703px; height: 924px; display: flex; flex-direction: column; background: #242b35; font: 12px/15px 'Open Sans', 'Noto Sans', sans-serif; color: #f2f3f5; }
  .defs { position: absolute; }
  .t { display: inline-block; white-space: nowrap; }
  svg { display: block; flex: none; }
  .ribbon { box-sizing: border-box; flex: none; height: 95px; margin-left: 1px; border: 1px solid #0696d7; border-right: 0; background: #3b4453; display: flex; }
  .panel { box-sizing: border-box; flex: none; height: 93px; border-right: 1px solid #262e39; display: flex; flex-direction: column; }
  .panel.last { border: 0; }
  .body { height: 76px; box-sizing: border-box; padding-top: 2px; display: flex; align-items: flex-start; }
  .big { all: unset; box-sizing: border-box; flex: none; height: 72px; padding-top: 3px; display: flex; flex-direction: column; align-items: center; }
  .big.on { background: #2c3440; box-shadow: inset 0 0 0 1px #252d38; }
  .caption { display: flex; flex-direction: column; align-items: center; padding-top: 3px; }
  .line { height: 15px; display: block; }
  .stack { flex: none; display: flex; flex-direction: column; }
  .small { height: 24px; display: flex; align-items: center; gap: 5px; }
  .small .t { padding-bottom: 2px; }
  .small.off { color: #6f7783; }
  .title { height: 16px; display: flex; justify-content: center; align-items: center; color: #a4abb4; }
  .title .t { padding-bottom: 2px; }
  .title.exit { background: #0696d7; color: #fff; width: 51px; margin-left: 1px; }
  .title .caret { margin-left: 7px; }
  .caret { width: 0; height: 0; border: 4px solid transparent; border-top-color: #a9b3bf; border-bottom: 0; }
  .caret.sm { border-width: 3px; border-bottom: 0; margin-left: 6px; }
  .modes { flex: none; width: 224px; margin-left: 6px; display: flex; flex-direction: column; }
  .mode-row { height: 24px; display: flex; align-items: center; }
  .slot { width: 16px; margin-left: 4px; }
  .slot.two { margin-left: 8px; }
  .slot.three { margin-left: 6px; }
  .shade { margin-left: 5px; }
  .select { box-sizing: border-box; width: 180px; height: 22px; margin-left: 2px; border: 1px solid #2a323e; display: flex; align-items: center; justify-content: space-between; padding: 0 1px 0 6px; }
  .select .t { padding-bottom: 1px; }
  .lit { width: 22px; height: 20px; border: 1px solid #3b93c4; background: #3a546b; display: flex; align-items: center; justify-content: center; }
  .main { flex: 1; display: flex; padding-top: 1px; min-height: 0; }
  .browser { width: 309px; flex: none; margin-right: 1px; background: #3b4453; font: 11px/14px 'DejaVu Sans Condensed', 'DejaVu Sans', sans-serif; font-stretch: condensed; display: flex; flex-direction: column; }
  .tabs { height: 24px; background: #242b36; display: flex; align-items: center; }
  .tab { width: 58px; height: 24px; box-sizing: border-box; padding: 0 7px 0 3px; background: #3b4453; display: flex; align-items: center; justify-content: space-between; }
  .tab .t { padding-top: 1px; }
  .add { margin-left: 6px; }
  .find { margin-left: 188px; }
  .menu { margin-left: 10px; }
  .views { height: 32px; display: flex; align-items: center; padding-left: 6px; }
  .views > .t { padding-top: 2px; }
  .bar { width: 2px; height: 14px; background: #8c949f; margin: 0 5px 0 6px; }
  .active { align-self: flex-start; color: #2fa5de; border-bottom: 1px solid #2fa5de; padding: 10px 6px 0 3px; margin: 0; }
  .row { height: 20px; display: flex; align-items: center; }
  .row .t { padding-top: 3px; }
  .lead { overflow: visible; }
  .row.dim { background: #323a47; color: #949aa3; }
  .viewport { flex: 1; position: relative; background: #000; }
  .scene { position: absolute; left: 0; top: 0; }
  .legend { position: relative; padding: 43px 0 0 19px; width: 200px; font: 15.5px/20px 'DejaVu Sans', sans-serif; font-weight: 200; color: #f0f0f0; }
  .scale { display: flex; height: 438px; margin-top: 3px; }
  .ramp { width: 19px; height: 419px; margin: 13px 10px 0 1px; display: flex; flex-direction: column; background: linear-gradient(#00f, #0ff 25%, #0f0 50%, #ff0 75%, #f00); }
  .ramp i { flex: 1; border-bottom: 1px solid #111; }
  .ramp i.end { border: 0; }
  .ticks { display: flex; flex-direction: column; justify-content: space-between; }
  .axis { font: 12px 'Liberation Sans', sans-serif; }
</style>
